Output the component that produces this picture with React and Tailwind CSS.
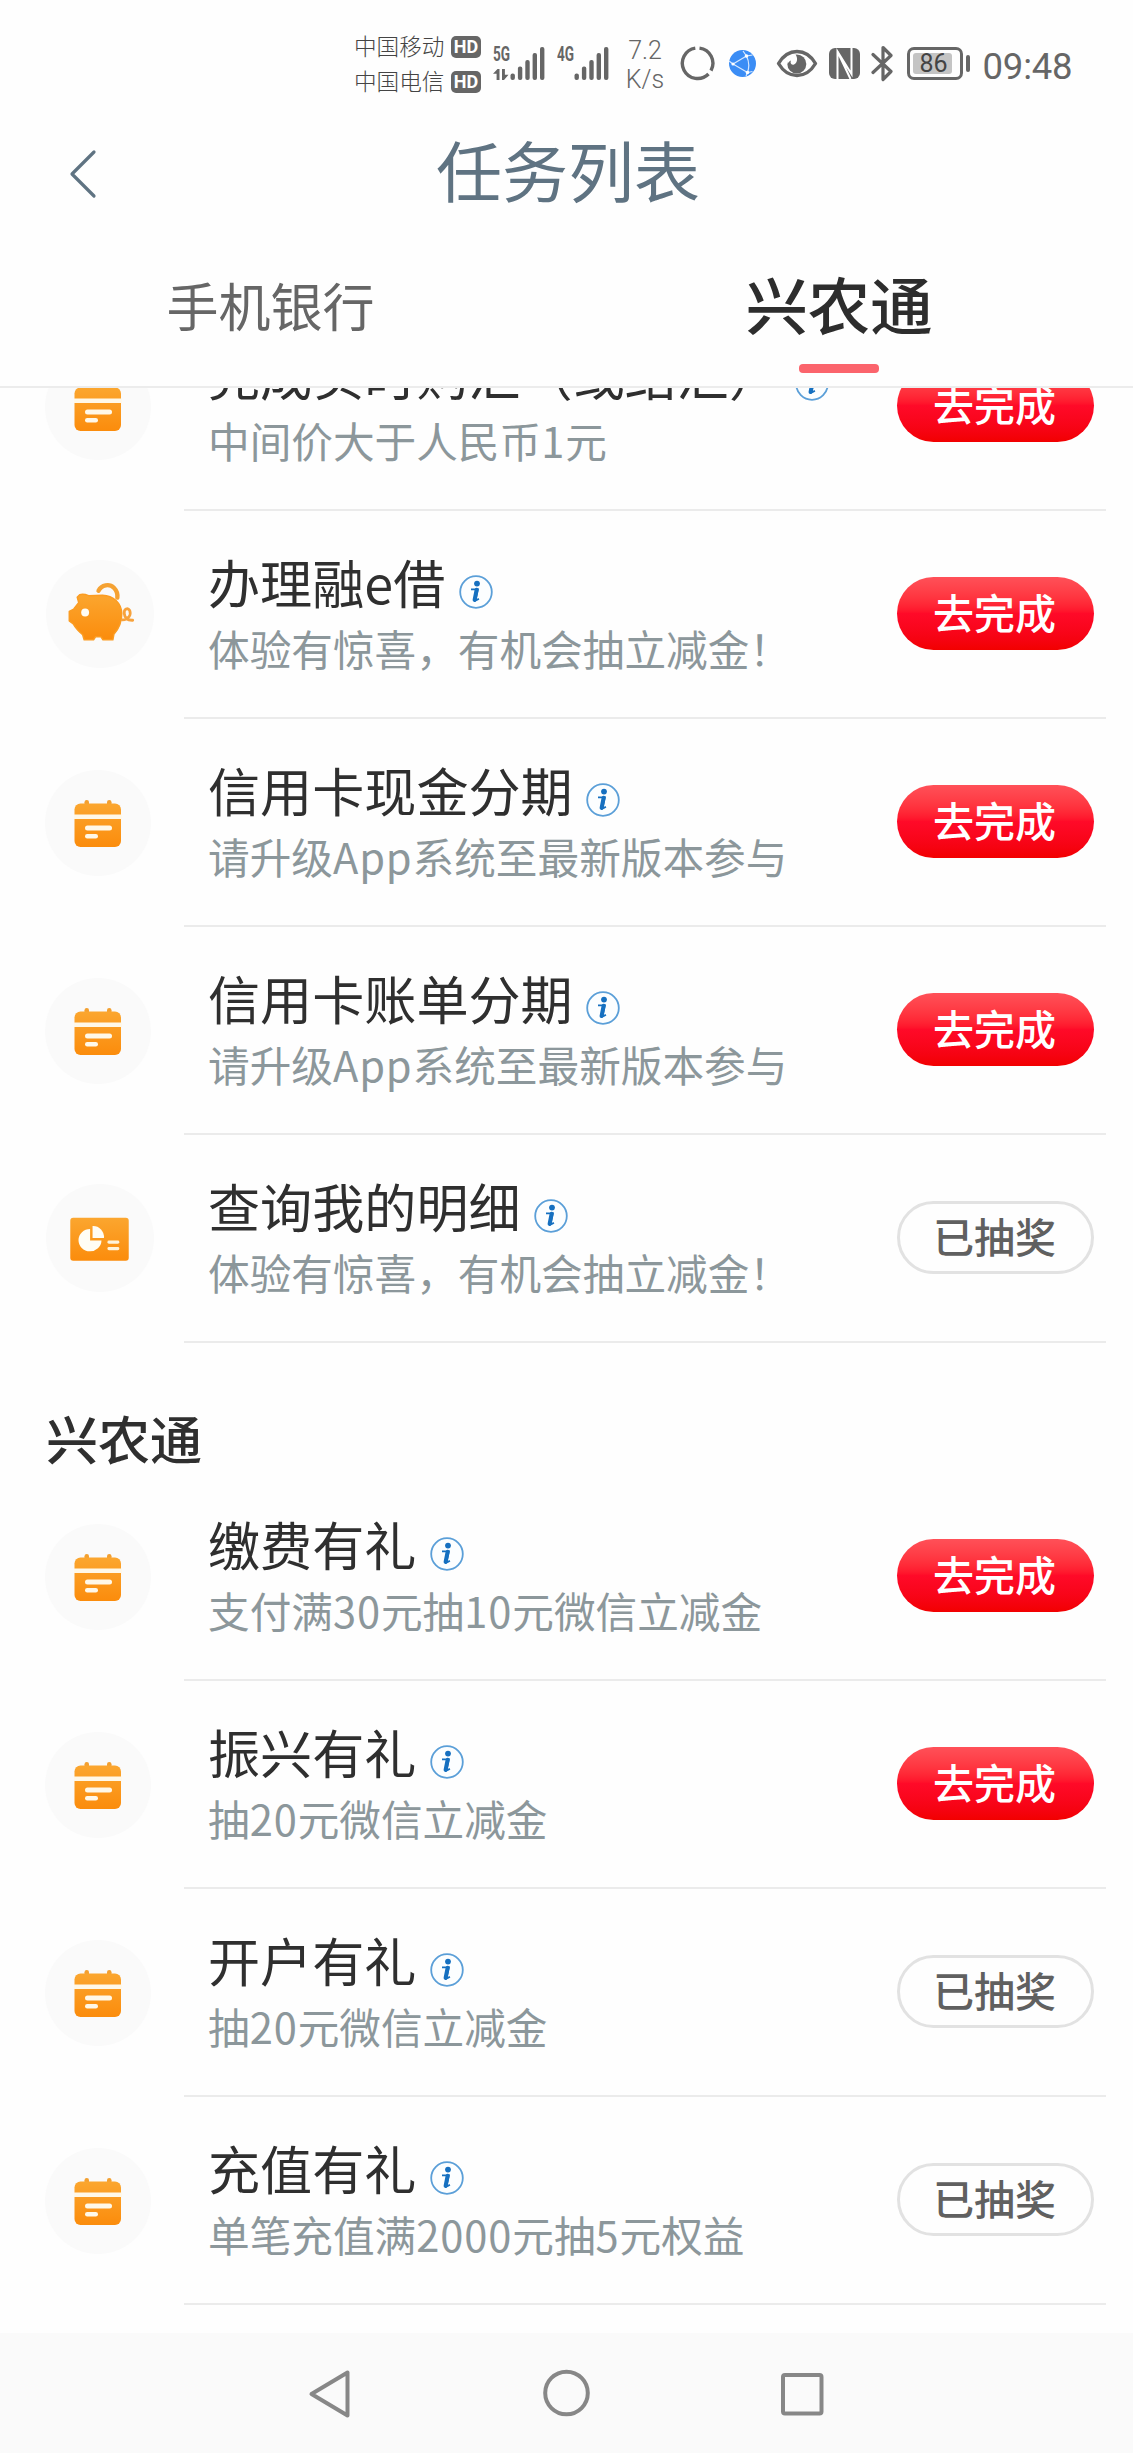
import React from 'react';

const CJK = "font-['Noto_Sans_CJK_SC',sans-serif]";

function SignalBars() {
  return (
    <g fill="#666">
      <rect x="0" y="26.5" width="4.4" height="6.5" rx="2" />
      <rect x="7.4" y="19.5" width="4.4" height="13.5" rx="2" />
      <rect x="14.8" y="13" width="4.4" height="20" rx="2" />
      <rect x="22.1" y="6" width="4.4" height="27" rx="2" />
      <rect x="29.5" y="0" width="4.4" height="33" rx="2" />
    </g>
  );
}

function Carrier({ name }) {
  return (
    <div className="flex h-[35px] items-center">
      <span className="-mt-[3px] w-[97px] text-[22.600px] leading-[35px] font-light text-[#444]">{name}</span>
      <span className="flex h-[22px] w-[30px] items-center justify-center rounded-[5px] bg-[#666] font-[Roboto,sans-serif] text-[18px] leading-none font-bold text-white">
        HD
      </span>
    </div>
  );
}

function Signal({ label, data }) {
  return (
    <div className="relative h-[34px] w-[52px]">
      <span className="absolute top-0 left-0 origin-left scale-x-[0.68] font-[Roboto,sans-serif] text-[20px] leading-[15px] font-bold text-[#666]">
        {label}
      </span>
      <svg className="absolute top-0 left-0" width="52" height="34" viewBox="0 0 52 34">
        <g transform="translate(17.5 0)">
          <SignalBars />
        </g>
        {data && (
          <g fill="#666">
            <path d="M6.5 22v11H3.6V26.800H0L4.500 22z" />
            <path d="M9 22h2.900v5.800h3.600L11 33H9z" />
          </g>
        )}
      </svg>
    </div>
  );
}

function StatusBar() {
  return (
    <div className="flex h-[128px] items-start pl-[354px] text-[#666]">
      <div className="mt-[29px]">
        <Carrier name="中国移动" />
        <Carrier name="中国电信" />
      </div>
      <div className="mt-[47px] ml-[12px] flex">
        <Signal label="5G" data />
        <div className="ml-[12px]">
          <Signal label="4G" />
        </div>
      </div>
      <div className="mt-[37px] ml-[16px] w-[40px] text-center font-[Roboto,sans-serif] text-[25px] leading-[28.500px] font-light">
        <div>7.2</div>
        <div>K/s</div>
      </div>
      <svg className="mt-[46px] ml-[15px] shrink-0" width="35" height="35" viewBox="0 0 35 35" fill="none" stroke="#666" strokeWidth="3.4">
        <path d="M15.300 2.100A15.300 15.300 0 1 0 28.500 28" />
        <path d="M19.500 2.100A15.300 15.300 0 0 1 31 24.600" />
      </svg>
      <svg className="mt-[50px] ml-[13.500px] shrink-0" width="27" height="27" viewBox="0 0 27 27">
        <circle cx="13.500" cy="13.500" r="13.500" fill="#3b8df5" />
        <g fill="none" stroke="#d6e8ff" strokeWidth="1.200">
          <path d="M4 14 17.500 6M4 14l14.500 8.500M17.500 6q4 8 1 16.500M17.500 6 14 1M17.500 6l6-1M4 14 0 11M18.500 22.500 17 26M18.500 22.500l5-1" />
        </g>
        <g fill="#fff">
          <circle cx="4" cy="14" r="1.600" />
          <circle cx="17.500" cy="6" r="1.800" />
          <circle cx="18.500" cy="22.500" r="1.800" />
        </g>
      </svg>
      <svg className="mt-[49px] ml-[20px] shrink-0" width="42" height="29" viewBox="0 0 42 29">
        <path d="M2.500 14.500C12 -1.500 30 -1.500 39.500 14.500C30 30.500 12 30.500 2.500 14.500z" fill="none" stroke="#666" strokeWidth="3.400" strokeLinejoin="round" />
        <circle cx="20.800" cy="15" r="9.500" fill="#666" />
        <path d="M11 9.500C13 6.500 16 5.200 19.500 5.500C22 9 21.500 14 18 15.500C15 16.500 14 13.500 15 11.500C13.500 12 12 13.500 11.500 15z" fill="#fefefe" />
      </svg>
      <svg className="mt-[48px] ml-[11px] shrink-0" width="31" height="31" viewBox="0 0 31 31">
        <rect width="31" height="31" rx="6" fill="#666" />
        <path d="M8.500 31V3.500L22.500 26V9M8.500 3.500l13 27.500M22.500 0v26" fill="none" stroke="#fff" strokeWidth="2" />
      </svg>
      <svg className="mt-[45px] ml-[11px] shrink-0" width="23" height="37" viewBox="0 0 23 37" fill="none" stroke="#666" strokeWidth="3.200" strokeLinejoin="round" strokeLinecap="round">
        <path d="M2 9.500 20 26.500 12 34.500V2.500L20 10.500 2 27.500" />
      </svg>
      <div className="mt-[47px] ml-[13px] flex items-center">
        <div className="flex h-[33px] w-[56px] items-center rounded-[7px] border-[3px] border-[#666] pl-[3px]">
          <span className="flex h-[21px] w-[39px] items-center justify-center rounded-[3px] bg-[#c4c4c4] pl-[3px] font-[Roboto,sans-serif] text-[25px] leading-none text-[#444]">
            86
          </span>
        </div>
        <div className="ml-[3px] h-[17px] w-[4px] rounded-[2px] bg-[#666]" />
      </div>
      <span className="mt-[45px] ml-[13px] font-[Roboto,sans-serif] text-[36.500px] leading-[44px] font-normal tracking-[-0.200px]">09:48</span>
    </div>
  );
}

function Gradient({ id }) {
  return (
    <defs>
      <linearGradient id={id} x1="0" y1="0" x2="0" y2="1">
        <stop offset="0" stopColor="#fba62f" />
        <stop offset="1" stopColor="#fb8c0c" />
      </linearGradient>
    </defs>
  );
}

function CalendarIcon() {
  return (
    <svg className="h-[106px] w-[106px]" viewBox="0 0 106 106">
      <Gradient id="cal" />
      <circle cx="53" cy="53" r="53" fill="#fafafa" />
      <rect x="39.500" y="30" width="4.500" height="8" rx="2.200" fill="#f3a030" />
      <rect x="62" y="30" width="4.500" height="8" rx="2.200" fill="#f3a030" />
      <rect x="29.500" y="33.500" width="46.500" height="43.500" rx="6" fill="url(#cal)" />
      <rect x="29" y="44.500" width="48" height="4.500" fill="#fff8e8" />
      <rect x="40" y="55.500" width="27" height="5" rx="2.500" fill="#fff8e8" />
      <rect x="40" y="64" width="13" height="4.500" rx="2.200" fill="#fff8e8" />
    </svg>
  );
}

function PiggyIcon() {
  return (
    <svg className="h-[108px] w-[108px]" viewBox="0 0 109 109">
      <Gradient id="pig" />
      <circle cx="54.500" cy="54.500" r="54.500" fill="#fafafa" />
      <path d="M53 31C56 25 64 23.500 68.500 28C71.500 31 72.500 34 72 38" fill="none" stroke="#f5a233" strokeWidth="4.400" strokeLinecap="round" />
      <path
        d="M34 35Q38 34 43 36L57 35.500C68 36 76 43 76.500 54C76.500 64 73 70 68.500 75L67.500 80.500H57.500L55.500 77.500H50L48 80.500H38.500L37 75.500C33 72 30 69 27.500 64.500L23.500 61.500V52L28 49.500L33 43L31.500 37.500Z"
        fill="url(#pig)"
        stroke="#fb9c22"
        strokeWidth="1.500"
        strokeLinejoin="round"
      />
      <circle cx="39.500" cy="53" r="4" fill="#fffdf5" />
      <path d="M77 60.500C84 60 86 55 84.500 51C82.500 47.500 78.500 49.500 79 54C79.500 59 82 61 87.500 60.800" fill="none" stroke="#f7a23c" strokeWidth="2.800" strokeLinecap="round" />
    </svg>
  );
}

function ReportIcon() {
  return (
    <svg className="h-[108px] w-[108px]" viewBox="0 0 109 109">
      <Gradient id="rep" />
      <circle cx="54.500" cy="54.500" r="54.500" fill="#fafafa" />
      <rect x="24.500" y="34" width="59" height="43.500" rx="3" fill="url(#rep)" />
      <path d="M44.500 45.500V57H56A11.600 11.200 0 1 1 44.500 45.500z" fill="#fffdf5" />
      <path d="M47 42.500A11 11 0 0 1 58.500 54.500H47z" fill="#fffdf5" />
      <rect x="62" y="57" width="12" height="3.400" rx="1.500" fill="#fff3da" />
      <rect x="62" y="63.500" width="12" height="3.400" rx="1.500" fill="#fff3da" />
    </svg>
  );
}

function InfoIcon() {
  return (
    <svg className="mt-[19px] ml-[13.500px] shrink-0" width="34" height="34" viewBox="0 0 34 34">
      <circle cx="17" cy="17" r="15.800" fill="#fcfeff" stroke="#5b9fd8" strokeWidth="1.800" />
      <circle cx="18" cy="8.600" r="2.900" fill="#1670c0" />
      <path d="M12 14.300h7l-2.300 10q-.2 1.800 3.200-.5" fill="none" stroke="#1670c0" strokeWidth="1.700" />
      <path d="M17.600 14.800 15.600 25" stroke="#1670c0" strokeWidth="4" strokeLinecap="round" />
    </svg>
  );
}

const ICONS = { calendar: CalendarIcon, pig: PiggyIcon, report: ReportIcon };

/* Latin letters and digits are set slightly looser than the Chinese text. */
function Description({ text }) {
  return text.split(/([A-Za-z0-9]+)/).map((part, i) =>
    i % 2 === 1 ? (
      <span key={i} className="tracking-[0.900px]">
        {part}
      </span>
    ) : (
      part
    )
  );
}

function TaskRow({ icon, title, desc, done }) {
  const Icon = ICONS[icon];
  return (
    <div className="flex h-[208px] shrink-0">
      <div className={icon === 'calendar' ? 'w-[184px] pt-[51px] pl-[45px]' : 'w-[184px] pt-[49px] pl-[45.500px]'}>
        <Icon />
      </div>
      <div className="mr-[27px] flex flex-1 border-b-2 border-[#ebebeb] pl-[24px]">
        <div className="flex-1 whitespace-nowrap">
          <div className="mt-[45px] flex h-[52px] text-[#2f2f2f]">
            <span className="text-[52.100px] leading-[52px]">{title}</span>
            <InfoIcon />
          </div>
          <div className="mt-[19px] text-[41.650px] leading-[42px] text-[#8c979b]">
            <Description text={desc} />
          </div>
        </div>
        {done ? (
          <div className="mt-[66px] mr-[12px] flex h-[73px] w-[197px] items-center justify-center rounded-full border-[3px] border-[#e2e2e2] pr-[2px] pb-[5px] text-[41px] leading-none font-medium text-[#606060]">
            已抽奖
          </div>
        ) : (
          <div className="mt-[66px] mr-[12px] flex h-[73px] w-[197px] items-center justify-center rounded-full bg-linear-to-b from-[#ff5058] via-[#ff0a28] to-[#f20000] pr-[2px] pb-[5px] text-[41px] leading-none font-medium text-white">
            去完成
          </div>
        )}
      </div>
    </div>
  );
}

const BANK_TASKS = [
  { icon: 'calendar', title: '完成实时购汇（或结汇）', desc: '中间价大于人民币1元' },
  { icon: 'pig', title: '办理融e借', desc: '体验有惊喜，有机会抽立减金！' },
  { icon: 'calendar', title: '信用卡现金分期', desc: '请升级App系统至最新版本参与' },
  { icon: 'calendar', title: '信用卡账单分期', desc: '请升级App系统至最新版本参与' },
  { icon: 'report', title: '查询我的明细', desc: '体验有惊喜，有机会抽立减金！', done: true },
];

const FARM_TASKS = [
  { icon: 'calendar', title: '缴费有礼', desc: '支付满30元抽10元微信立减金' },
  { icon: 'calendar', title: '振兴有礼', desc: '抽20元微信立减金' },
  { icon: 'calendar', title: '开户有礼', desc: '抽20元微信立减金', done: true },
  { icon: 'calendar', title: '充值有礼', desc: '单笔充值满2000元抽5元权益', done: true },
];

export default function App() {
  return (
    <div className={`flex h-[2453px] w-[1133px] flex-col overflow-hidden bg-[#fefefe] ${CJK}`}>
      <StatusBar />
      <header className="grid h-[92px] shrink-0 grid-cols-[1fr_auto_1fr] items-center">
        <svg className="ml-[69px]" width="28" height="50" viewBox="0 0 28 50" fill="none" stroke="#5f7382" strokeWidth="3.200" strokeLinecap="round" strokeLinejoin="round">
          <path d="M25 3 3 25l22 22" />
        </svg>
        <h1 className="-mt-[12px] pl-[3px] text-[66px] leading-[92px] text-[#5f7382]">任务列表</h1>
        <span />
      </header>
      <nav className="flex h-[168px] shrink-0 border-b-2 border-[#ececec] whitespace-nowrap">
        <div className="flex w-[541px] justify-center pt-[59px] text-[52px] leading-[52px] text-[#666]">手机银行</div>
        <div className="flex w-[592px] flex-col items-center pt-[52px] pl-[4px]">
          <span className="text-[62.400px] leading-[62px] font-medium text-[#2d2d2d]">兴农通</span>
          <span className="mt-[30px] h-[9px] w-[80px] rounded-[4px] bg-[#fb646c]" />
        </div>
      </nav>
      <main className="flex flex-1 flex-col overflow-hidden">
        <div className="-mt-[85px] flex flex-col">
          {BANK_TASKS.map((t) => (
            <TaskRow key={t.title} {...t} />
          ))}
          <h2 className="h-[130px] shrink-0 pt-[69px] pl-[46px] text-[52px] leading-[52px] font-medium text-[#2f2f2f]">兴农通</h2>
          {FARM_TASKS.map((t) => (
            <TaskRow key={t.title} {...t} />
          ))}
        </div>
      </main>
      <footer className="flex h-[120px] shrink-0 bg-[#fafafa] pt-[36px] pl-[307px]">
        <svg width="44" height="50" viewBox="0 0 44 50" fill="none" stroke="#878787" strokeWidth="4" strokeLinejoin="round">
          <path d="M40.500 3.500v43L4.500 25z" />
        </svg>
        <svg className="ml-[191px]" width="50" height="50" viewBox="0 0 50 50" fill="none" stroke="#878787" strokeWidth="4">
          <circle cx="24.500" cy="24" r="21.300" />
        </svg>
        <svg className="ml-[186px]" width="48" height="50" viewBox="0 0 48 50" fill="none" stroke="#878787" strokeWidth="4">
          <rect x="5" y="6" width="38.500" height="38.500" rx="2" />
        </svg>
      </footer>
    </div>
  );
}
